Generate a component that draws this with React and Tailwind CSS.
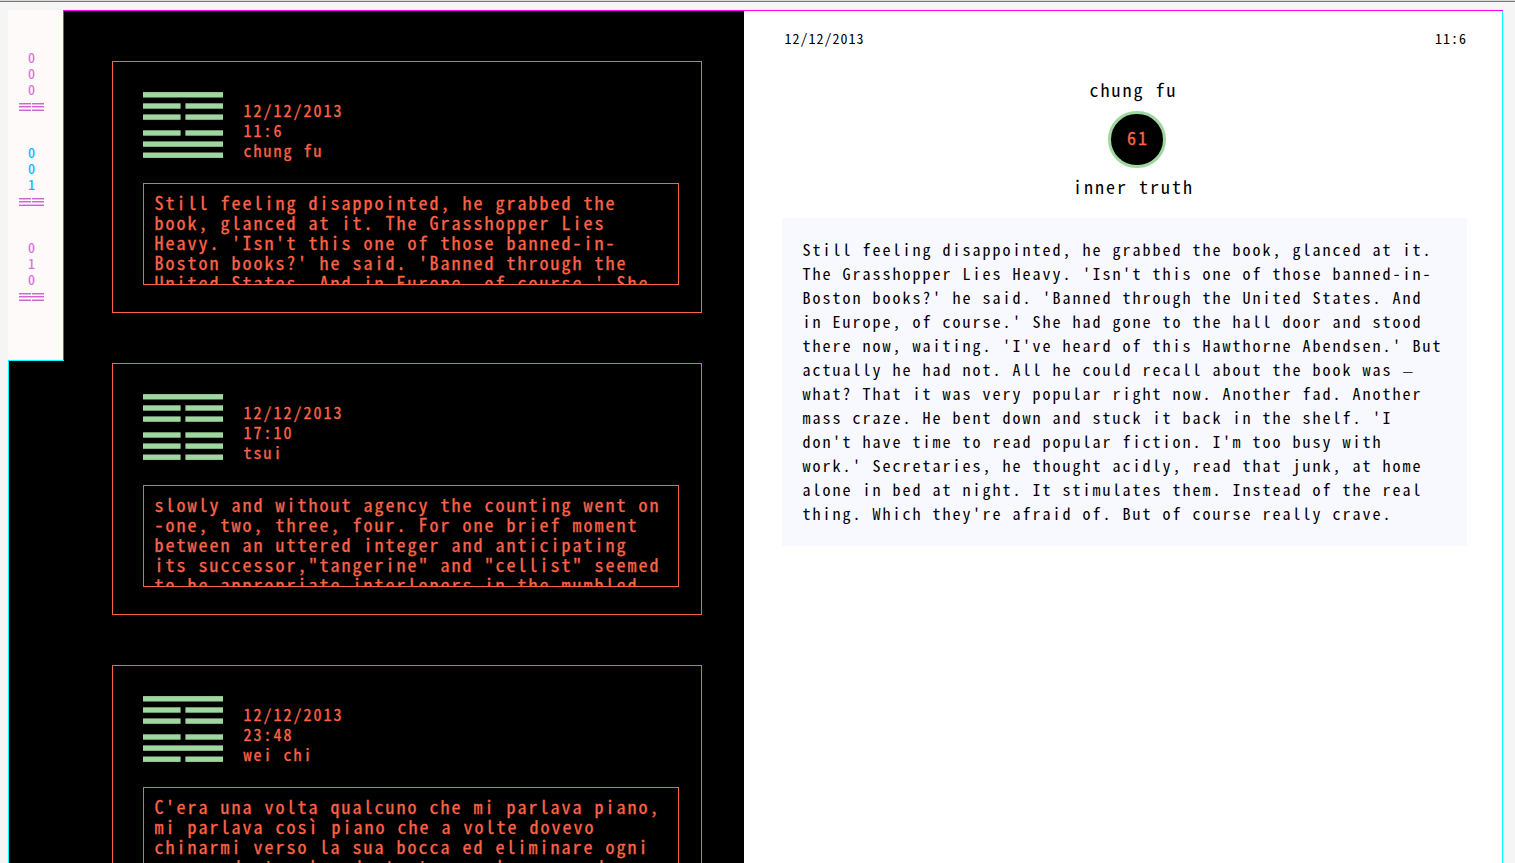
const MONO = "font-['Noto_Sans_Mono_CJK_JP','DejaVu_Sans_Mono',monospace]";

const readings = [
  {
    time: "11:6",
    name: "chung fu",
    lines: [1, 0, 0, 0, 1, 1],
    text: "Still feeling disappointed, he grabbed the\nbook, glanced at it. The Grasshopper Lies\nHeavy. 'Isn't this one of those banned-in-\nBoston books?' he said. 'Banned through the\nUnited States. And in Europe, of course.' She",
  },
  {
    time: "17:10",
    name: "tsui",
    lines: [1, 0, 0, 0, 0, 0],
    text: "slowly and without agency the counting went on\n-one, two, three, four. For one brief moment\nbetween an uttered integer and anticipating\nits successor,\"tangerine\" and \"cellist\" seemed\nto be appropriate interlopers in the mumbled",
  },
  {
    time: "23:48",
    name: "wei chi",
    lines: [1, 0, 0, 0, 1, 0],
    text: (
      <>
        {"C'era una volta qualcuno che mi parlava piano,\nmi parlava cos"}
        <span className="ml-[2px] tracking-[5px]">ì</span>
        {" piano che a volte dovevo\nchinarmi verso la sua bocca ed eliminare ogni\nrumore dentro la adente terra al suo mondo"}
      </>
    ),
  },
];

const LINE_Y = [0.1, 11.3, 22.4, 38.3, 49.4, 60.5];

const passageStart = `Still feeling disappointed, he grabbed the book, glanced at it.
The Grasshopper Lies Heavy. 'Isn't this one of those banned-in-
Boston books?' he said. 'Banned through the United States. And
in Europe, of course.' She had gone to the hall door and stood
there now, waiting. 'I've heard of this Hawthorne Abendsen.' But
actually he had not. All he could recall about the book was `;

const passageEnd = `
what? That it was very popular right now. Another fad. Another
mass craze. He bent down and stuck it back in the shelf. 'I
don't have time to read popular fiction. I'm too busy with
work.' Secretaries, he thought acidly, read that junk, at home
alone in bed at night. It stimulates them. Instead of the real
thing. Which they're afraid of. But of course really crave.`;

function Hexagram({ lines }) {
  return (
    <svg width="80" height="66" viewBox="0 0 80 66" fill="#a0d6a0">
      {lines.map((solid, i) =>
        solid ? (
          <rect key={i} x="0" y={LINE_Y[i]} width="80" height="5.4" />
        ) : (
          <g key={i}>
            <rect x="0" y={LINE_Y[i]} width="37.6" height="5.4" />
            <rect x="42.4" y={LINE_Y[i]} width="37.6" height="5.4" />
          </g>
        )
      )}
    </svg>
  );
}

function Trigram({ lines }) {
  return (
    <svg width="25" height="8" viewBox="0 0 25 8" shapeRendering="crispEdges">
      {lines.map((solid, i) => (
        <g key={i}>
          <rect x="0" y={[0, 3, 7][i]} width="25" height="1" fill="#cf66cf" />
          <rect x="0" y={[1, 4, 6][i]} width="25" height="1" fill="#ecb4ea" />
          {!solid && <rect x="12" y={[0, 3, 6][i]} width="1" height="2" fill="#fffafa" />}
        </g>
      ))}
    </svg>
  );
}

function SideItem({ digits, active, lines }) {
  return (
    <div className="flex h-[95px] flex-col">
      <div
        className={`w-[47px] text-center text-[14px] leading-[16px] [-webkit-text-stroke:0.2px] ${active ? "text-[#00b7ff]" : "text-[#da70d6]"}`}
      >
        {digits.map((d, i) => (
          <div key={i}>{d}</div>
        ))}
      </div>
      <div className="mt-[6px] ml-[11px] flex">
        <Trigram lines={lines} />
      </div>
    </div>
  );
}

function Card({ reading }) {
  return (
    <article className="h-[252px] w-[590px] shrink-0 border border-[#ff6347] px-[30px] pt-[30px] [-webkit-text-stroke:0.3px]">
      <div className="flex h-[91px] gap-5">
        <Hexagram lines={reading.lines} />
        <div className="pt-[8px] pl-[0.6px] text-[16px] leading-[20px] tracking-[2px] whitespace-pre">
          <div>12/12/2013</div>
          <div>{reading.time}</div>
          <div>{reading.name}</div>
        </div>
      </div>
      <div className="h-[102px] w-[536px] overflow-hidden border border-[#ff6347] px-[10.5px] pt-[8px] text-[18px] leading-[20px] tracking-[2px] whitespace-pre">
        {reading.text}
      </div>
    </article>
  );
}

export default function App() {
  return (
    <div className={`h-[863px] w-[1515px] overflow-hidden bg-[#f5f5f5] text-black ${MONO}`}>
      <div className="h-[2px] border-b border-[#777777] bg-[#d8d8d8]" />
      <div className="mt-2 ml-2 flex h-[853px] w-[1495px]">
        <aside className="flex w-[55px] shrink-0 flex-col">
          <nav className="h-[350px] bg-[#fffafa] pt-[39px]">
            <SideItem digits={["0", "0", "0"]} lines={[0, 0, 0]} />
            <SideItem digits={["0", "0", "1"]} lines={[0, 0, 1]} active />
            <SideItem digits={["0", "1", "0"]} lines={[0, 1, 0]} />
          </nav>
          <div className="flex-1 border-t border-l border-[#00ffff] bg-black" />
        </aside>
        <div className="flex min-w-0 flex-1 border-t border-[#ff00ff]">
          <div className="flex w-px shrink-0 flex-col bg-black">
            <div className="h-[349px] bg-[#ff00ff]" />
            <div className="h-px bg-[#00ffff]" />
          </div>
          <section className="flex w-[680px] shrink-0 flex-col gap-[50px] overflow-hidden bg-black pt-[50px] pl-[48px] text-[#ff6347]">
            {readings.map((r) => (
              <Card key={r.time} reading={r} />
            ))}
          </section>
          <section className="min-w-0 flex-1 border-r border-[#00ffff] bg-white pr-[35px] pl-[38px]">
            <div className="flex justify-between pt-[17px] pl-[2.6px] text-[14px] leading-[20px] tracking-[1px]">
              <span>12/12/2013</span>
              <span>11:6</span>
            </div>
            <div className="flex flex-col items-center pt-[31px] pl-[18px] text-[18px] leading-[20px] tracking-[2px]">
              <span>chung fu</span>
              <div className="mt-[12px] ml-[6px] flex h-[57px] w-[58px] items-center justify-center rounded-full border-3 border-[#a0d6a0] bg-black pb-[6px] pl-[3px] text-[#ff6347] [-webkit-text-stroke:0.3px]">
                61
              </div>
              <span className="mt-[8px]">inner truth</span>
            </div>
            <p className="mt-[22px] h-[328px] w-[685px] bg-[#f8f9ff] pt-[19px] pl-[20.5px] text-[16px] leading-[24px] tracking-[2px] whitespace-pre">
              {passageStart}
              <span className="text-[12px] leading-none">—</span>
              {passageEnd}
            </p>
          </section>
        </div>
      </div>
    </div>
  );
}
